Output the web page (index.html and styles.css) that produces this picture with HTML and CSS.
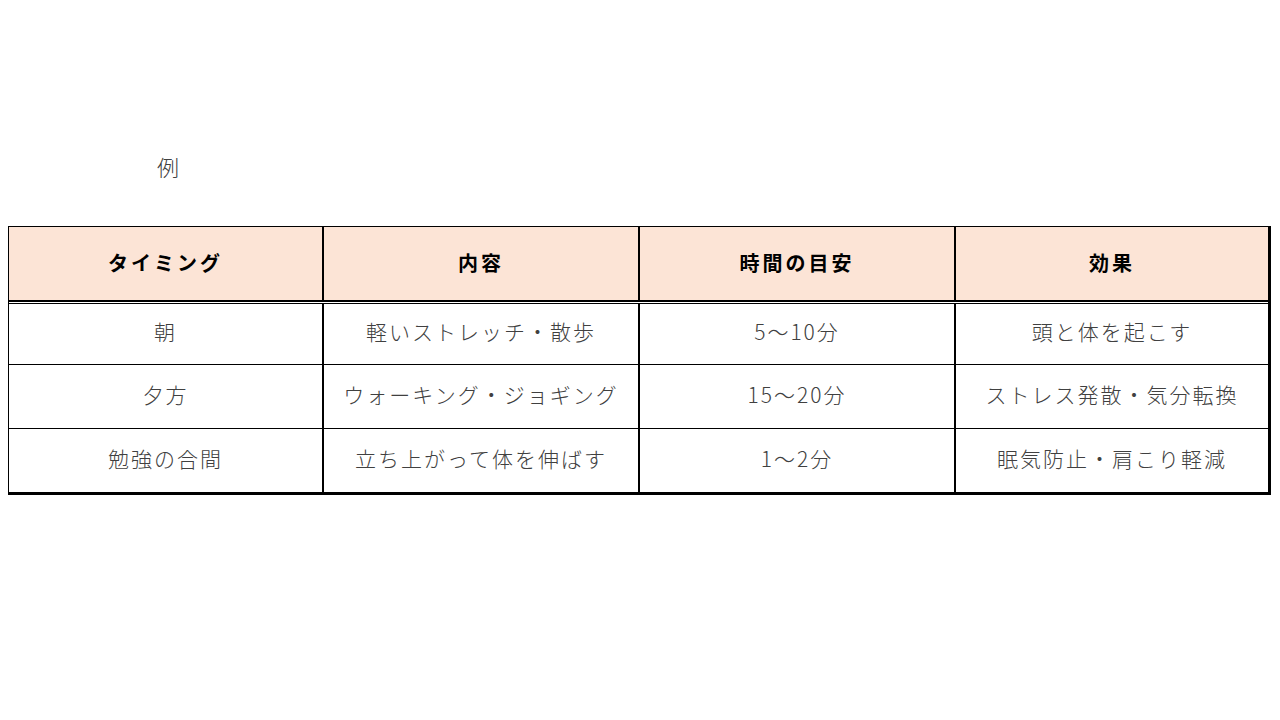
FILE: index.html
```html
<!DOCTYPE html>
<html lang="ja">
<head>
<meta charset="utf-8">
<link rel="stylesheet" href="styles.css">
</head>
<body>
<div class="page">
  <div class="label">例</div>
  <div class="tbl">
    <div class="row head">
      <div class="cell">タイミング</div>
      <div class="cell">内容</div>
      <div class="cell">時間の目安</div>
      <div class="cell last">効果</div>
    </div>
    <div class="row body first">
      <div class="cell">朝</div>
      <div class="cell">軽いストレッチ・散歩</div>
      <div class="cell">5～10分</div>
      <div class="cell last">頭と体を起こす</div>
    </div>
    <div class="row body">
      <div class="cell">夕方</div>
      <div class="cell">ウォーキング・ジョギング</div>
      <div class="cell">15～20分</div>
      <div class="cell last">ストレス発散・気分転換</div>
    </div>
    <div class="row body">
      <div class="cell">勉強の合間</div>
      <div class="cell">立ち上がって体を伸ばす</div>
      <div class="cell">1～2分</div>
      <div class="cell last">眠気防止・肩こり軽減</div>
    </div>
  </div>
</div>
</body>
</html>
```

FILE: styles.css
```css
html, body {
  margin: 0;
  padding: 0;
  background: #ffffff;
}
body {
  width: 1280px;
  height: 720px;
  overflow: hidden;
  font-family: "Noto Sans CJK JP", "Noto Sans", sans-serif;
}
.page {
  padding-top: 150px;
  padding-left: 8px;
}
.label {
  margin-left: 149px;
  font-size: 22px;
  line-height: 32px;
  font-weight: 300;
  color: #404040;
  height: 76px;
}
.tbl {
  width: 1259px;
  border-top: 1px solid #000;
  border-left: 1px solid #000;
  border-right: 3px solid #000;
  border-bottom: 3px solid #000;
  box-sizing: content-box;
}
.row {
  display: grid;
  grid-template-columns: 315px 316px 316px 1fr;
}
.cell {
  display: flex;
  align-items: center;
  justify-content: center;
  border-right: 2px solid #000;
  font-size: 21px;
  color: #404040;
  font-weight: 300;
  letter-spacing: 2px;
  white-space: nowrap;
  padding-bottom: 6px;
}
.cell.last {
  border-right: none;
}
.head {
  height: 73px;
  background: #fce4d6;
  border-bottom: 2px solid #000;
}
.head .cell {
  font-weight: 700;
  color: #000;
  font-size: 20px;
  letter-spacing: 3px;
  padding-bottom: 3px;
}
.body {
  height: 63px;
  border-top: 1px solid #000;
}
.body.first {
  height: 60px;
  margin-top: 1px;
}
.body.last-row {
  height: 62px;
}
```
